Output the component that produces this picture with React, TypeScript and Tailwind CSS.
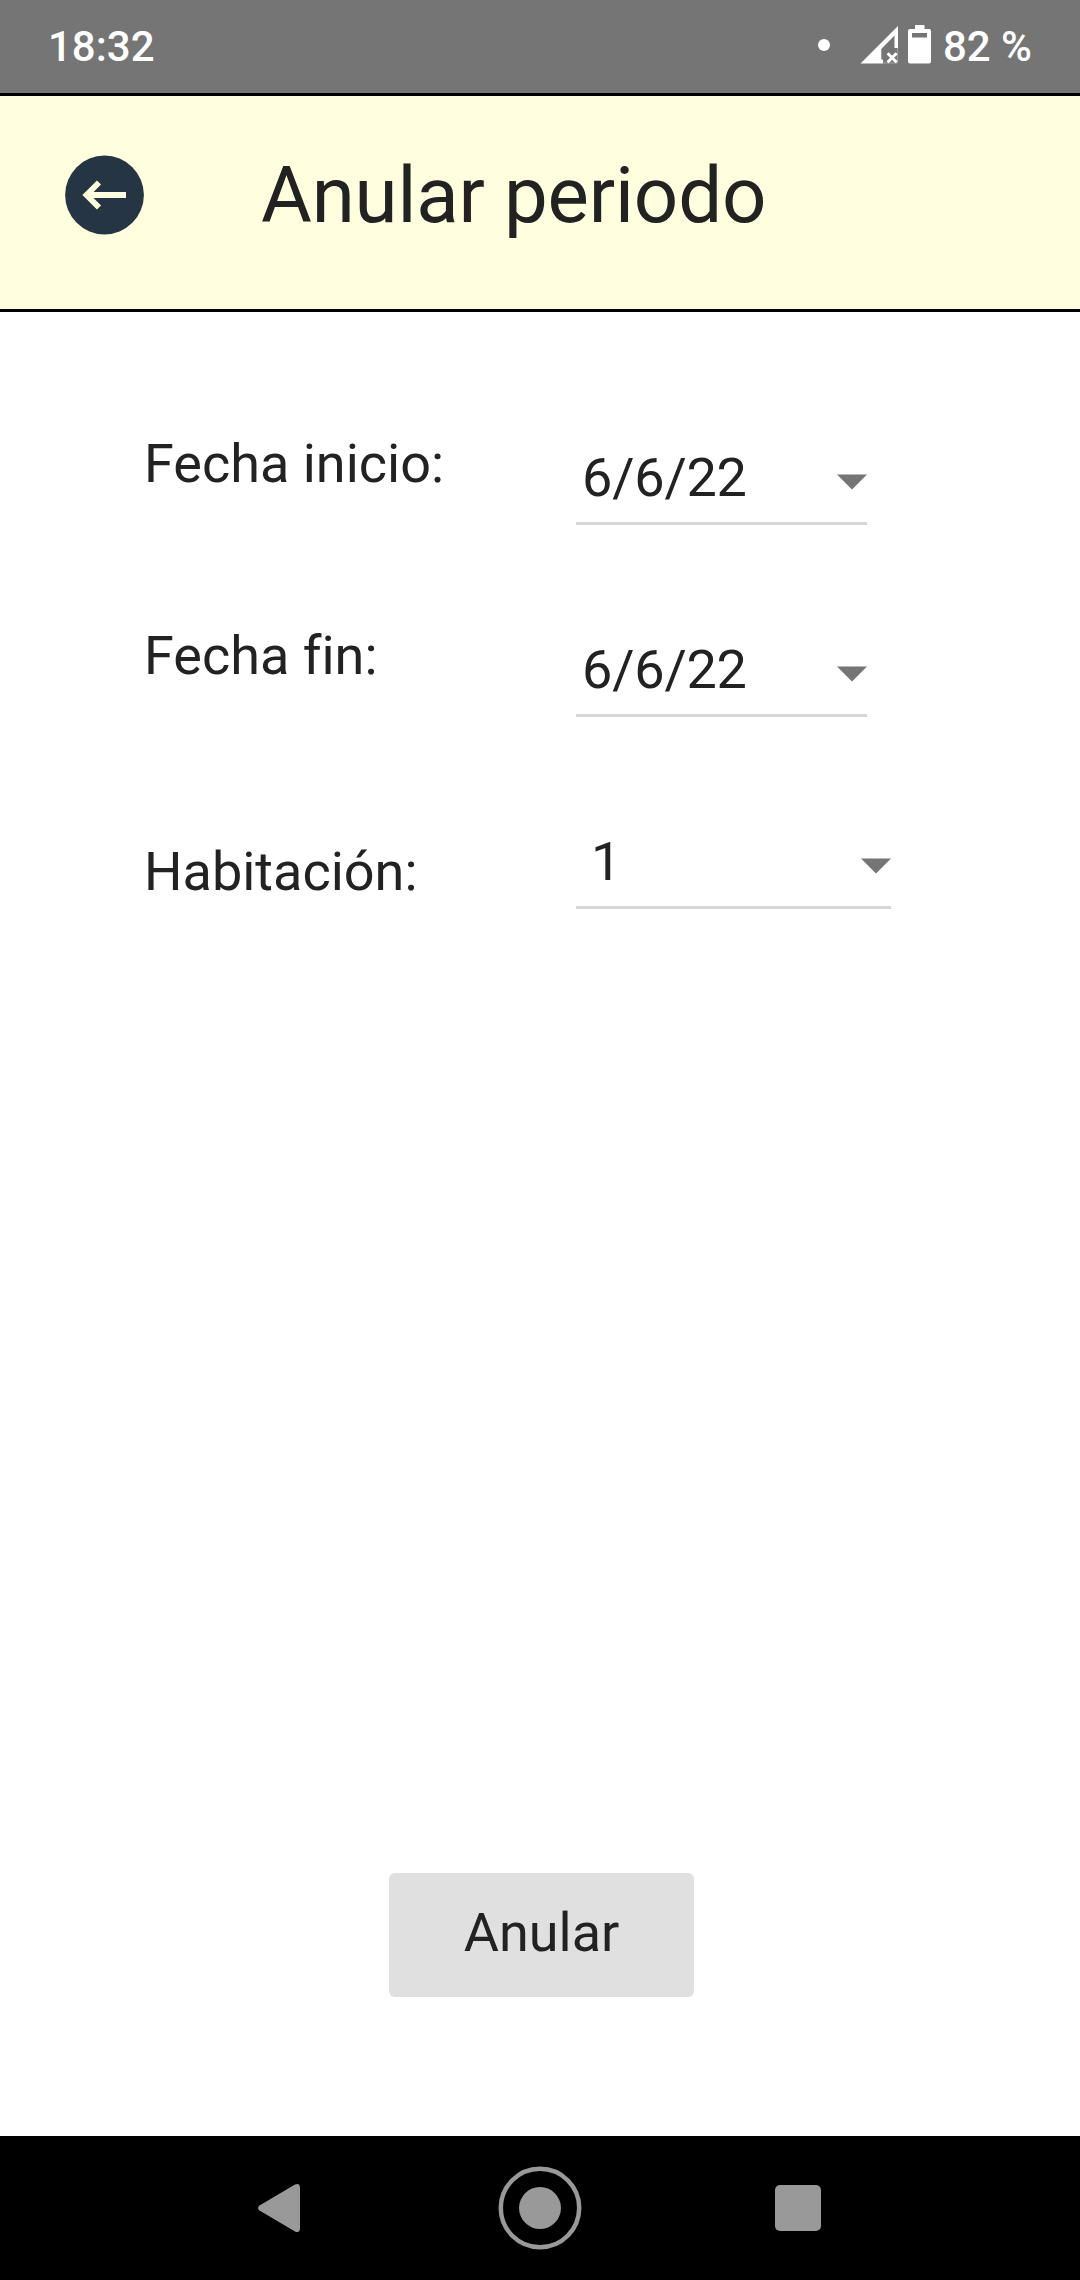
function StatusBar() {
  return (
    <div className="flex h-[93px] items-start bg-[#757575] pt-[22px] text-[42px] leading-[49px] font-medium text-white">
      <span className="ml-[48px]">18:32</span>
      <span className="mt-[17px] ml-auto size-3 rounded-full bg-white" />
      <svg className="mt-[3px] ml-[30px] shrink-0" width="38" height="39" viewBox="0 0 38 39" fill="white">
        <path d="M.5 38.500 38 1V23H34.500V10.500L21.300 24V34.500H23V38.500Z" />
        <path d="M27.600 28.300 36.600 37.300M36.600 28.300 27.600 37.300" stroke="white" strokeWidth="3" fill="none" />
        <path d="M23 38H37.700V23" stroke="white" strokeOpacity=".35" strokeWidth="1" fill="none" />
      </svg>
      <svg className="mt-[3px] ml-[10px] shrink-0" width="23" height="39" viewBox="0 0 23 39" fill="white">
        <path fillRule="evenodd" d="M7 0H16.500V4H21Q23 4 23 6V36.500Q23 38.500 21 38.500H2Q0 38.500 0 36.500V6Q0 4 2 4H7ZM4 8V12.500H19V8Z" />
      </svg>
      <span className="mr-[48px] ml-[12px]">82 %</span>
    </div>
  );
}

function Header() {
  return (
    <header className="flex h-[219px] items-start border-y-[3px] border-black bg-[#ffffdf]">
      <button className="mt-[59px] ml-[65px]" aria-label="Volver">
        <svg width="79" height="80" viewBox="0 0 79 80">
          <circle cx="39.500" cy="40" r="39.400" fill="#263543" />
          <path d="M61 40H22M34 27.500 21.500 40 34 52.500" fill="none" stroke="#ffffdf" strokeWidth="5.800" />
        </svg>
      </button>
      <h1 className="mt-[54px] ml-[117px] text-[78px] leading-[91px] tracking-[-0.170px]">Anular periodo</h1>
    </header>
  );
}

type FieldProps = { label: string; value: string; wide?: boolean };

function Field({ label, value, wide }: FieldProps) {
  return (
    <div className="flex h-[192px] items-start pl-[144px]">
      <span className={wide ? "mt-[24px] w-[432px]" : "w-[432px]"}>{label}</span>
      <button
        className={
          wide
            ? "mt-[14px] flex h-[79px] w-[315px] justify-between border-b-[3px] border-[#d6d6d6] pl-[15px]"
            : "mt-[14px] flex h-[79px] w-[291px] justify-between border-b-[3px] border-[#d6d6d6] pl-[6px] tracking-[-0.200px]"
        }
      >
        <span>{value}</span>
        <svg className="mt-[28px]" width="30" height="16" viewBox="0 0 30 16" fill="#757575">
          <path d="M0 .4H30L15 15.500Z" />
        </svg>
      </button>
    </div>
  );
}

function NavBar() {
  return (
    <nav className="flex h-[144px] items-center bg-black text-[#999999]">
      <svg className="ml-[258px]" width="42" height="48" viewBox="0 0 42 48" fill="currentColor">
        <path d="M37 .6Q42-1.500 42 4V44Q42 49.500 37 47.400L1.500 26.500Q-1.300 24 1.500 21.500Z" />
      </svg>
      <svg className="ml-[198px]" width="84" height="84" viewBox="0 0 84 84">
        <circle cx="42" cy="42" r="39.200" fill="none" stroke="currentColor" strokeWidth="4.500" />
        <circle cx="42" cy="42" r="21" fill="currentColor" />
      </svg>
      <span className="ml-[193.400px] size-[45.200px] rounded-[5px] bg-[#999999]" />
    </nav>
  );
}

export default function App() {
  return (
    <div className="flex h-[2280px] w-[1080px] flex-col bg-white font-['Roboto',sans-serif] text-[#222222] [font-variant-ligatures:none]">
      <StatusBar />
      <Header />
      <main className="flex flex-1 flex-col pt-[120px] text-[54px] leading-[63px]">
        <Field label="Fecha inicio:" value="6/6/22" />
        <Field label="Fecha fin:" value="6/6/22" />
        <Field label="Habitación:" value="1" wide />
        <button className="mt-auto mb-[139px] ml-[389px] h-[124px] w-[305px] rounded-[6px] bg-[#e0e0e0] pb-[5px]">
          Anular
        </button>
      </main>
      <NavBar />
    </div>
  );
}
